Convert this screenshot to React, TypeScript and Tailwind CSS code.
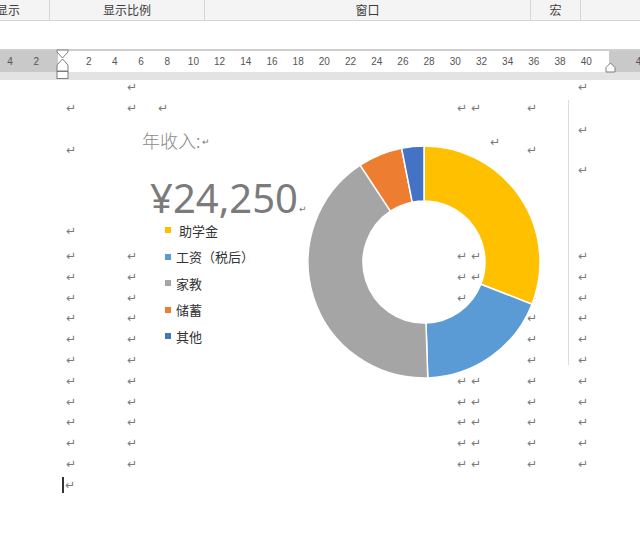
import React from "react";

const cjk = "font-['Noto_Sans_CJK_SC','Noto_Sans',sans-serif]";

const slices = [
  { label: " 助学金", value: 7500, color: "#ffc000", dot: "bg-[#ffc000]" },
  { label: "工资（税后）", value: 4500, color: "#5b9bd5", dot: "bg-[#5b9bd5]" },
  { label: "家教", value: 10000, color: "#a5a5a5", dot: "bg-[#a5a5a5]" },
  { label: "储蓄", value: 1500, color: "#ed7d31", dot: "bg-[#ed7d31]" },
  { label: "其他", value: 750, color: "#4472c4", dot: "bg-[#4472c4]" },
];

// grid columns where the paragraph marks sit (x centres 71,132,163,462,476,495,532,583)
const colClass: Record<number, string> = {
  71: "col-start-2",
  132: "col-start-4",
  163: "col-start-6",
  462: "col-start-8",
  476: "col-start-10",
  495: "col-start-12",
  532: "col-start-14",
  583: "col-start-16",
};

const rulerLabels = ["4", "2", "", "2", "4", "6", "8", "10", "12", "14", "16", "18", "20", "22", "24", "26", "28", "30", "32", "34", "36", "38", "40", "", "4"];

function Mark({ className }: { className?: string }) {
  return (
    <span className={`font-['DejaVu_Sans',sans-serif] leading-none text-[#7a7a7a] ${className ?? "text-[12px]"}`}>↵</span>
  );
}

function MarkRow({ h, cols, shift }: { h: string; cols: number[]; shift?: Record<number, string> }) {
  return (
    <div className={`grid ${h} grid-cols-[66px_10px_51px_10px_21px_10px_289px_10px_4px_10px_9px_10px_27px_10px_41px_10px] items-center`}>
      {cols.map((c) => (
        <div key={c} className={`${colClass[c]} row-start-1 flex justify-center ${shift?.[c] ?? ""}`}>
          <Mark />
        </div>
      ))}
    </div>
  );
}

function arc(cx: number, cy: number, R: number, r: number, a0: number, a1: number) {
  const rad = (a: number) => (a * Math.PI) / 180;
  const p = (rr: number, a: number) => [cx + rr * Math.sin(rad(a)), cy - rr * Math.cos(rad(a))];
  const large = a1 - a0 > 180 ? 1 : 0;
  const [x0, y0] = p(R, a0);
  const [x1, y1] = p(R, a1);
  const [x2, y2] = p(r, a1);
  const [x3, y3] = p(r, a0);
  return `M${x0} ${y0} A${R} ${R} 0 ${large} 1 ${x1} ${y1} L${x2} ${y2} A${r} ${r} 0 ${large} 0 ${x3} ${y3} Z`;
}

function Donut() {
  const total = slices.reduce((s, x) => s + x.value, 0);
  let acc = 0;
  return (
    <svg width="250" height="250" viewBox="0 0 250 250">
      {slices.map((s) => {
        const a0 = (acc / total) * 360;
        acc += s.value;
        const a1 = (acc / total) * 360;
        return <path key={s.label} d={arc(124, 122, 116, 61, a0, a1)} fill={s.color} stroke="#ffffff" strokeWidth="1.5" />;
      })}
    </svg>
  );
}

function Ribbon() {
  return (
    <div className={`flex h-[21px] border-b border-[#d4d4d4] bg-[#f4f4f4] text-[12px] leading-[20px] text-[#3c3c3c] ${cjk}`}>
      <div className="flex w-[50px] border-r border-[#d6d6d6]">
        <span className="-ml-[4px]">显示</span>
      </div>
      <div className="flex w-[155px] justify-center border-r border-[#d6d6d6]">显示比例</div>
      <div className="flex w-[326px] justify-center border-r border-[#d6d6d6]">窗口</div>
      <div className="flex w-[50px] justify-center border-r border-[#d6d6d6]">宏</div>
      <div className="flex-1" />
    </div>
  );
}

function Ruler() {
  return (
    <div className="relative border-t-2 border-[#cfcfcf]">
      <div className="flex h-[21px] items-center bg-[linear-gradient(to_right,#c9c9c9_58px,#ffffff_58px,#ffffff_609px,#c9c9c9_609px)] font-['Liberation_Sans',sans-serif] text-[10px] text-[#555555]">
        <div className="-ml-[3px] flex">
          {rulerLabels.map((l, i) => (
            <span key={i} className="w-[26.2px] text-center">
              {l}
            </span>
          ))}
        </div>
      </div>
      <div className="h-[8px] bg-[#e3e3e3]" />
      <svg className="absolute left-0 top-[-2px]" width="640" height="32" viewBox="0 50 640 32">
        <g fill="#ffffff" stroke="#7d7d7d" strokeWidth="1">
          <polygon points="57,51 68,51 68,53 62.5,59 57,53" />
          <polygon points="62.5,60 68,66 68,72 57,72 57,66" />
          <rect x="57" y="72.5" width="11" height="7" />
          <polygon points="610.5,64 615,68.5 615,73 606,73 606,68.5" />
        </g>
      </svg>
    </div>
  );
}

function ChartObject() {
  return (
    <div className="absolute left-[140px] top-[45px] flex">
      <div className="flex w-[160px] shrink-0 flex-col whitespace-nowrap">
        <div className={`mt-[3px] flex h-[24px] items-center pl-[2px] text-[18px] font-light text-[#8a8a8a] ${cjk}`}>
          年收入:
          <Mark className="ml-[1px] mt-[4px] text-[9px]" />
        </div>
        <div className="mt-[26px] flex h-[40px] items-end pl-[10px] font-['Noto_Sans',sans-serif] text-[40px] leading-[40px] text-[#7b7b7b]">
          ¥24,250
          <Mark className="mb-[4px] ml-[1px] text-[9px]" />
        </div>
        <div className={`-mt-[1px] flex flex-col pl-[25px] text-[13px] text-[#333333] ${cjk}`}>
          {slices.map((s) => (
            <div key={s.label} className="flex h-[26.5px] items-center gap-[5px] whitespace-pre">
              <span className={`size-[6px] ${s.dot}`} />
              <span>{s.label}</span>
            </div>
          ))}
        </div>
      </div>
      <div className="mt-[15px] shrink-0">
        <Donut />
      </div>
    </div>
  );
}

function Document() {
  const full = [71, 132, 462, 476, 532, 583];
  return (
    <div className="relative h-[454px] bg-white">
      <MarkRow h="h-[14px]" cols={[132, 583]} />
      <div className="h-[4px]" />
      <MarkRow h="h-[20px]" cols={[71, 132, 163, 462, 476, 532]} />
      <div className="h-[6px]" />
      <MarkRow h="h-[12px]" cols={[583]} />
      <MarkRow h="h-[20px]" cols={[71, 495, 532]} shift={{ 71: "translate-y-[4px]", 495: "-translate-y-[4px]", 532: "translate-y-[4px]" }} />
      <div className="h-[4px]" />
      <MarkRow h="h-[20px]" cols={[583]} />
      <div className="h-[40.6px]" />
      <MarkRow h="h-[20.8px]" cols={[71]} />
      <div className="h-[4.2px]" />
      <MarkRow h="h-[20.8px]" cols={[71, 132, 462, 476, 583]} />
      <MarkRow h="h-[20.8px]" cols={[71, 132, 462, 476, 583]} />
      <MarkRow h="h-[20.8px]" cols={[71, 132, 462, 532, 583]} />
      <MarkRow h="h-[20.8px]" cols={[71, 132, 532, 583]} />
      <MarkRow h="h-[20.8px]" cols={[71, 132, 532, 583]} />
      <MarkRow h="h-[20.8px]" cols={[71, 132, 532, 583]} />
      <MarkRow h="h-[20.8px]" cols={full} />
      <MarkRow h="h-[20.8px]" cols={full} />
      <MarkRow h="h-[20.8px]" cols={full} />
      <MarkRow h="h-[20.8px]" cols={full} />
      <MarkRow h="h-[20.8px]" cols={full} />
      <div className="flex h-[20.8px] items-center pl-[62px]">
        <span className="h-[16px] w-[2px] bg-[#333333]" />
        <Mark className="ml-[1px] text-[12px]" />
      </div>

      <div className="absolute left-[568px] top-[20px] h-[265px] w-px bg-[#dcdcdc]" />
      <ChartObject />
    </div>
  );
}

export default function App() {
  return (
    <div className="h-[534px] w-[640px] overflow-hidden bg-white">
      <Ribbon />
      <div className="h-[28px] bg-white" />
      <Ruler />
      <Document />
    </div>
  );
}
